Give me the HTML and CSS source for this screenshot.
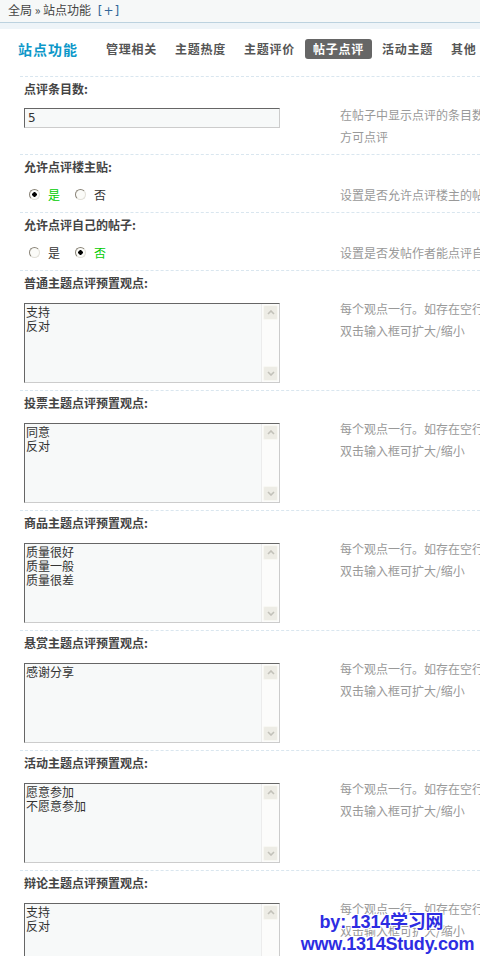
FILE: index.html
```html
<!DOCTYPE html>
<html>
<head>
  <meta charset="utf-8">
  <meta name="viewport" content="width=device-width, initial-scale=1.0">
  <title>站点功能 - 帖子点评</title>
  <link rel="stylesheet" href="styles.css">
</head>
<body>
  <div class="topbar">全局 &raquo; 站点功能 <span class="add">[+]</span></div>

  <div class="tabs">
    <h3>站点功能</h3>
    <ul>
      <li>管理相关</li>
      <li>主题热度</li>
      <li>主题评价</li>
      <li class="current">帖子点评</li>
      <li>活动主题</li>
      <li>其他</li>
    </ul>
  </div>

  <form class="settings">
    <div class="row">
      <div class="title">点评条目数:</div>
      <div class="body">
        <div class="field"><input class="txt" type="text" value="5"></div>
        <div class="desc">在帖子中显示点评的条目数，需在用户组中开启点评权限<br>方可点评</div>
      </div>
    </div>

    <div class="row">
      <div class="title">允许点评楼主贴:</div>
      <div class="body">
        <div class="field radios">
          <label class="on"><input type="radio" name="first" checked>是</label>
          <label><input type="radio" name="first">否</label>
        </div>
        <div class="desc">设置是否允许点评楼主的帖子</div>
      </div>
    </div>

    <div class="row">
      <div class="title">允许点评自己的帖子:</div>
      <div class="body">
        <div class="field radios">
          <label><input type="radio" name="self">是</label>
          <label class="on"><input type="radio" name="self" checked>否</label>
        </div>
        <div class="desc">设置是否发帖作者能点评自己的帖子</div>
      </div>
    </div>

    <div class="row">
      <div class="title">普通主题点评预置观点:</div>
      <div class="body">
        <div class="field">
          <div class="area">
            <textarea>支持
反对</textarea>
            <div class="sb"><span class="btn"><svg width="8" height="5" viewBox="0 0 8 5"><path d="M1 4 L4 1 L7 4" fill="none" stroke="#c2c1b9" stroke-width="1.6"/></svg></span><span class="btn"><svg width="8" height="5" viewBox="0 0 8 5"><path d="M1 1 L4 4 L7 1" fill="none" stroke="#c2c1b9" stroke-width="1.6"/></svg></span></div>
          </div>
        </div>
        <div class="desc tall">每个观点一行。如存在空行，则不显示<br>双击输入框可扩大/缩小</div>
      </div>
    </div>

    <div class="row">
      <div class="title">投票主题点评预置观点:</div>
      <div class="body">
        <div class="field">
          <div class="area">
            <textarea>同意
反对</textarea>
            <div class="sb"><span class="btn"><svg width="8" height="5" viewBox="0 0 8 5"><path d="M1 4 L4 1 L7 4" fill="none" stroke="#c2c1b9" stroke-width="1.6"/></svg></span><span class="btn"><svg width="8" height="5" viewBox="0 0 8 5"><path d="M1 1 L4 4 L7 1" fill="none" stroke="#c2c1b9" stroke-width="1.6"/></svg></span></div>
          </div>
        </div>
        <div class="desc tall">每个观点一行。如存在空行，则不显示<br>双击输入框可扩大/缩小</div>
      </div>
    </div>

    <div class="row">
      <div class="title">商品主题点评预置观点:</div>
      <div class="body">
        <div class="field">
          <div class="area">
            <textarea>质量很好
质量一般
质量很差</textarea>
            <div class="sb"><span class="btn"><svg width="8" height="5" viewBox="0 0 8 5"><path d="M1 4 L4 1 L7 4" fill="none" stroke="#c2c1b9" stroke-width="1.6"/></svg></span><span class="btn"><svg width="8" height="5" viewBox="0 0 8 5"><path d="M1 1 L4 4 L7 1" fill="none" stroke="#c2c1b9" stroke-width="1.6"/></svg></span></div>
          </div>
        </div>
        <div class="desc tall">每个观点一行。如存在空行，则不显示<br>双击输入框可扩大/缩小</div>
      </div>
    </div>

    <div class="row">
      <div class="title">悬赏主题点评预置观点:</div>
      <div class="body">
        <div class="field">
          <div class="area">
            <textarea>感谢分享</textarea>
            <div class="sb"><span class="btn"><svg width="8" height="5" viewBox="0 0 8 5"><path d="M1 4 L4 1 L7 4" fill="none" stroke="#c2c1b9" stroke-width="1.6"/></svg></span><span class="btn"><svg width="8" height="5" viewBox="0 0 8 5"><path d="M1 1 L4 4 L7 1" fill="none" stroke="#c2c1b9" stroke-width="1.6"/></svg></span></div>
          </div>
        </div>
        <div class="desc tall">每个观点一行。如存在空行，则不显示<br>双击输入框可扩大/缩小</div>
      </div>
    </div>

    <div class="row">
      <div class="title">活动主题点评预置观点:</div>
      <div class="body">
        <div class="field">
          <div class="area">
            <textarea>愿意参加
不愿意参加</textarea>
            <div class="sb"><span class="btn"><svg width="8" height="5" viewBox="0 0 8 5"><path d="M1 4 L4 1 L7 4" fill="none" stroke="#c2c1b9" stroke-width="1.6"/></svg></span><span class="btn"><svg width="8" height="5" viewBox="0 0 8 5"><path d="M1 1 L4 4 L7 1" fill="none" stroke="#c2c1b9" stroke-width="1.6"/></svg></span></div>
          </div>
        </div>
        <div class="desc tall">每个观点一行。如存在空行，则不显示<br>双击输入框可扩大/缩小</div>
      </div>
    </div>

    <div class="row">
      <div class="title">辩论主题点评预置观点:</div>
      <div class="body">
        <div class="field">
          <div class="area">
            <textarea>支持
反对</textarea>
            <div class="sb"><span class="btn"><svg width="8" height="5" viewBox="0 0 8 5"><path d="M1 4 L4 1 L7 4" fill="none" stroke="#c2c1b9" stroke-width="1.6"/></svg></span><span class="btn"><svg width="8" height="5" viewBox="0 0 8 5"><path d="M1 1 L4 4 L7 1" fill="none" stroke="#c2c1b9" stroke-width="1.6"/></svg></span></div>
          </div>
        </div>
        <div class="desc tall">每个观点一行。如存在空行，则不显示<br>双击输入框可扩大/缩小</div>
      </div>
    </div>
  </form>

  <div class="mark"><span class="by">by: 1314学习网</span><br>www.1314Study.com</div>
</body>
</html>
```

FILE: styles.css
```css
/* admin page, settings > post comment */
html, body {
  overflow: hidden;
}
body {
  margin: 0;
  background: #fff;
  color: #444;
  font-family: "Noto Sans CJK SC", "Liberation Sans", sans-serif;
  font-size: 12px;
}

.topbar {
  height: 22px;
  line-height: 19px;
  padding-left: 8px;
  background: #f6f8f8;
  border-bottom: 1px solid #bcd2df;
  color: #444;
}
.topbar .add {
  margin-left: 4px;
  color: #336699;
  letter-spacing: 1px;
  font-family: "DejaVu Sans", sans-serif;
}

.tabs {
  display: flex;
  align-items: center;
  height: 20px;
  padding: 10px 0 0 18px;
  margin-bottom: 17px;
  border-top: 6px solid #eef4f8;
}
.tabs h3 {
  margin: 0 20px 0 0;
  font-size: 14px;
  letter-spacing: 1px;
  color: #0d98c9;
  white-space: nowrap;
}
.tabs ul {
  display: flex;
  margin: 0;
  padding: 0;
  list-style: none;
}
.tabs li {
  height: 20px;
  line-height: 20px;
  padding: 0 8px;
  margin-right: 2px;
  border-radius: 3px;
  font-weight: bold;
  letter-spacing: 0.75px;
  color: #555;
  white-space: nowrap;
}
.tabs li.current {
  background: #666;
  color: #fff;
}

.settings {
  margin: 0;
}
.row {
  margin-left: 20px;
  padding: 2px 0 6px 4px;
  border-top: 1px dashed #d9e6ef;
}
.title {
  height: 20px;
  line-height: 20px;
  font-weight: bold;
  color: #444;
}
.body {
  display: flex;
  margin-top: 5px;
}
.field {
  flex: none;
  box-sizing: border-box;
  width: 256px;
}
.desc {
  margin-left: 60px;
  line-height: 22px;
  color: #999;
  white-space: nowrap;
}
.radios + .desc {
  padding-top: 2px;
}

.txt {
  display: block;
  box-sizing: border-box;
  width: 256px;
  height: 20px;
  margin: 4px 0 0;
  padding: 0 3px;
  border: 1px solid;
  border-color: #666 #ccc #ccc #666;
  background: #f7f9f9;
  color: #333;
  font-family: "DejaVu Sans", sans-serif;
  font-size: 12px;
}

.radios {
  display: flex;
  align-items: center;
  height: 24px;
  padding-left: 5px;
}
.radios label {
  display: flex;
  align-items: center;
  margin-right: 15px;
  color: #333;
}
.radios label.on {
  color: #00cc00;
}
.radios input {
  appearance: none;
  -webkit-appearance: none;
  box-sizing: border-box;
  width: 11px;
  height: 11px;
  margin: 0 8px 0 0;
  border: 1px solid;
  border-color: #8a8478 #e2e0d8 #e2e0d8 #8a8478;
  border-radius: 50%;
  background: #fbfbf8;
}
.radios input:checked {
  background: radial-gradient(circle, #000 0, #000 2px, #fbfbf8 2.5px);
}

.area {
  display: flex;
  box-sizing: border-box;
  width: 256px;
  height: 80px;
  margin: 5px 0 1px;
  border: 1px solid;
  border-color: #666 #ccc #ccc #666;
  background: #f7f9f9;
}
.area textarea {
  flex: 1;
  min-width: 0;
  margin: 0;
  padding: 1px 1px;
  border: none;
  background: transparent;
  color: #333;
  font-family: "Noto Sans CJK SC", sans-serif;
  font-size: 12px;
  line-height: 14px;
  resize: none;
  overflow: hidden;
  outline: none;
}
.sb {
  display: flex;
  flex-direction: column;
  justify-content: space-between;
  width: 15px;
  padding: 1px;
  background: #fcfcfb;
  border-left: 1px solid #ececec;
}
.sb .btn {
  display: flex;
  align-items: center;
  justify-content: center;
  box-sizing: border-box;
  height: 15px;
  border: 1px solid #f8f8f3;
  border-radius: 2px;
  background: #edece5;
}

.mark {
  position: absolute;
  left: 290px;
  top: 911px;
  width: 195px;
  text-align: center;
  font-family: "Liberation Sans", "Noto Sans CJK SC", sans-serif;
  font-weight: bold;
  font-size: 18px;
  line-height: 22px;
  letter-spacing: -0.2px;
  color: #2d2de2;
  text-shadow: 1px 0 #fff, -1px 0 #fff, 0 1px #fff, 0 -1px #fff, 1px 1px #fff, -1px -1px #fff, 1px -1px #fff, -1px 1px #fff;
}
.mark .by {
  margin-right: 12px;
}
```
